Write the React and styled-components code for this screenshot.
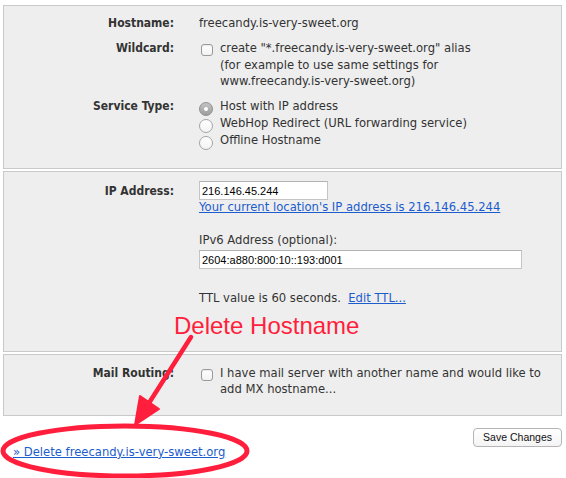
import React from "react";
import styled, { createGlobalStyle } from "styled-components";

const GlobalStyle = createGlobalStyle`
  html, body {
    margin: 0;
    padding: 0;
    background: #ffffff;
  }
  body {
    font-family: "DejaVu Sans", "Liberation Sans", sans-serif;
    font-size: 11.6px;
    color: #333333;
  }
`;

const RED = "#ff1f3c";

const serviceTypes = [
  { id: "host", label: "Host with IP address", checked: true },
  { id: "webhop", label: "WebHop Redirect (URL forwarding service)" },
  { id: "offline", label: "Offline Hostname" }
];

const App = () => {
  return (
    <Page>
      <GlobalStyle />

      <Panel $pt={9} $pb={19}>
        <Row>
          <Label>Hostname:</Label>
          <Value>freecandy.is-very-sweet.org</Value>
        </Row>
        <Row>
          <Label>Wildcard:</Label>
          <Option>
            <Checkbox />
            <Value>
              create "*.freecandy.is-very-sweet.org" alias
              <br />
              (for example to use same settings for
              <br />
              www.freecandy.is-very-sweet.org)
            </Value>
          </Option>
        </Row>
        <Row>
          <Label>Service Type:</Label>
          <RadioList>
            {serviceTypes.map((s) => (
              <RadioOption key={s.id}>
                <Radio $checked={s.checked} />
                <Value>{s.label}</Value>
              </RadioOption>
            ))}
          </RadioList>
        </Row>
      </Panel>

      <Panel $pt={9} $pb={45}>
        <Row>
          <Label $center>IP Address:</Label>
          <Stack>
            <TextInput readOnly value="216.146.45.244" $width={129} />
            <Link href="#">Your current location's IP address is 216.146.45.244</Link>
            <SubLabel>IPv6 Address (optional):</SubLabel>
            <TextInput readOnly value="2604:a880:800:10::193:d001" $width={323} />
            <Ttl>
              TTL value is 60 seconds.&nbsp;&nbsp;<Link href="#">Edit TTL...</Link>
            </Ttl>
          </Stack>
        </Row>
      </Panel>

      <Panel $pt={10} $pb={17}>
        <Row>
          <Label>Mail Routing:</Label>
          <Option>
            <Checkbox />
            <Value>
              I have mail server with another name and would like to
              <br />
              add MX hostname...
            </Value>
          </Option>
        </Row>
      </Panel>

      <Footer>
        <DeleteLink href="#">» Delete freecandy.is-very-sweet.org</DeleteLink>
        <SaveButton>Save Changes</SaveButton>
      </Footer>

      {/* annotation drawn over the page */}
      <Callout>Delete Hostname</Callout>
      <Markup width="566" height="478" viewBox="0 0 566 478">
        <line x1="191" y1="337" x2="149" y2="403" stroke={RED} strokeWidth="4.5" strokeLinecap="round" />
        <polygon points="135,425 140,396 159,409" fill={RED} stroke={RED} strokeWidth="2" strokeLinejoin="round" />
        <ellipse cx="125" cy="451" rx="122" ry="25" fill="none" stroke={RED} strokeWidth="5" />
      </Markup>
    </Page>
  );
};

const Page = styled.div`
  position: relative;
  width: 566px;
  height: 478px;
  overflow: hidden;
  padding-top: 5px;
  box-sizing: border-box;
  display: flex;
  flex-direction: column;
  gap: 2px;
`;

const Panel = styled.section`
  margin-left: 3px;
  width: 559px;
  box-sizing: border-box;
  background: #eeeeee;
  border: 1px solid #c9c9c9;
  padding: ${(p) => p.$pt}px 0 ${(p) => p.$pb}px 0;
  display: flex;
  flex-direction: column;
  gap: 9px;
`;

const Row = styled.div`
  display: grid;
  grid-template-columns: 170px 1fr;
  column-gap: 25px;
  align-items: start;
`;

const Label = styled.div`
  text-align: right;
  font-family: "DejaVu Sans Condensed", "DejaVu Sans", sans-serif;
  font-stretch: condensed;
  font-weight: bold;
  font-size: 12px;
  line-height: 16px;
  color: #333333;
  padding-top: ${(p) => (p.$center ? "2px" : "0")};
`;

const Value = styled.div`
  line-height: 16.3px;
  color: #333333;
`;

const Option = styled.div`
  display: flex;
  align-items: flex-start;
  gap: 7px;
  padding-left: 2px;
`;

const Checkbox = styled.span`
  flex: none;
  width: 10px;
  height: 10px;
  margin-top: 4px;
  border: 1px solid #9a9a9a;
  border-radius: 3px;
  background: linear-gradient(#ffffff, #f2f2f2);
  box-shadow: inset 0 1px 1px rgba(0, 0, 0, 0.08);
`;

const RadioList = styled.div`
  display: flex;
  flex-direction: column;
`;

const RadioOption = styled.div`
  display: flex;
  align-items: flex-start;
  gap: 7px;
  height: 17px;
`;

const Radio = styled.span`
  flex: none;
  position: relative;
  width: 12px;
  height: 12px;
  margin-top: 4px;
  border-radius: 50%;
  border: 1px solid ${(p) => (p.$checked ? "#8f8f8f" : "#a5a5a5")};
  background: ${(p) =>
    p.$checked ? "linear-gradient(#c4c4c4, #9d9d9d)" : "linear-gradient(#ffffff, #f3f3f3)"};

  &::after {
    content: "";
    display: ${(p) => (p.$checked ? "block" : "none")};
    position: absolute;
    left: 4px;
    top: 4px;
    width: 4px;
    height: 4px;
    border-radius: 50%;
    background: #ffffff;
  }
`;

const Stack = styled.div`
  display: flex;
  flex-direction: column;
  align-items: flex-start;
`;

const TextInput = styled.input`
  width: ${(p) => p.$width}px;
  height: 19px;
  box-sizing: border-box;
  margin: 0;
  padding: 1px 2px 0;
  border: 1px solid #c4c4c4;
  border-top-color: #b3b3b3;
  background: #ffffff;
  font-family: "Liberation Sans", Arial, sans-serif;
  font-size: 11px;
  color: #000000;
  outline: none;
`;

const Link = styled.a`
  color: #1c5ccd;
  text-decoration: underline;
  line-height: 15px;
`;

const SubLabel = styled.div`
  margin-top: 17px;
  margin-bottom: 2px;
  line-height: 16px;
`;

const Ttl = styled.div`
  margin-top: 21px;
  line-height: 16px;
`;

const Footer = styled.div`
  display: flex;
  justify-content: space-between;
  align-items: flex-start;
  width: 562px;
  padding-top: 10px;
  padding-left: 13px;
  box-sizing: border-box;
`;

const DeleteLink = styled.a`
  margin-top: 16px;
  color: #1c5ccd;
  text-decoration: underline;
  line-height: 16px;
`;

const SaveButton = styled.button`
  height: 19px;
  padding: 0 9px;
  border: 1px solid #b5b5b5;
  border-radius: 4px;
  background: linear-gradient(#ffffff, #f4f4f4);
  font-family: "Liberation Sans", Arial, sans-serif;
  font-size: 10.5px;
  color: #111111;
`;

const Callout = styled.span`
  position: absolute;
  left: 174px;
  top: 314px;
  font-family: "Liberation Sans", Arial, sans-serif;
  font-size: 24px;
  line-height: 24px;
  color: ${RED};
  pointer-events: none;
`;

const Markup = styled.svg`
  position: absolute;
  left: 0;
  top: 0;
  pointer-events: none;
`;

export default App;
